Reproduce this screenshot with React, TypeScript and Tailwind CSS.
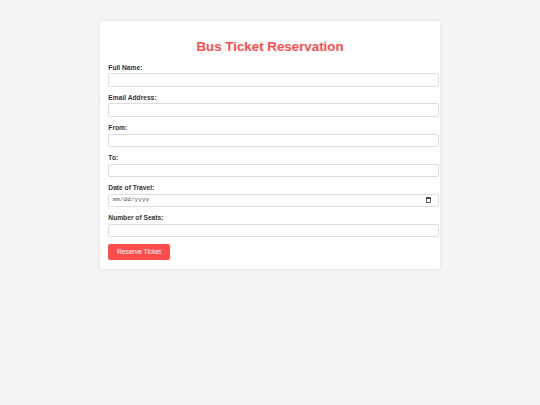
import React from "react";

const fields = [
  { label: "Full Name:", type: "text" },
  { label: "Email Address:", type: "email" },
  { label: "From:", type: "text" },
  { label: "To:", type: "text" },
  { label: "Date of Travel:", type: "date" },
  { label: "Number of Seats:", type: "number" },
];

export default function App() {
  return (
    <div className="min-h-[405px] w-full bg-[#f5f5f5] pt-[21px] [font-family:'Liberation_Sans',Arial,sans-serif]">
      <div className="mx-auto w-[340px] rounded-[3px] bg-white px-[8.33px] pt-[8.33px] pb-[9.6px] shadow-[0_0_4px_rgba(0,0,0,0.1)]">
        <h1 className="mt-[9.9px] mb-[9.4px] text-center text-[13.33px] font-bold leading-[15.33px] text-[#ff4d4d]">
          Bus Ticket Reservation
        </h1>
        <form onSubmit={(e) => e.preventDefault()}>
          {fields.map((f) => (
            <div key={f.label}>
              <label className="mb-[1.8px] block text-[6.67px] font-bold leading-[7.67px] text-[#333]">
                {f.label}
              </label>
              {f.type === "date" ? (
                <div className="mb-[7px] flex h-[13.6px] w-[331px] items-center justify-between rounded-[2px] border border-[#ddd] bg-white pl-[3.3px] pr-[7px]">
                  <span className="text-[6.1px] leading-none text-[#555] [font-family:'Liberation_Mono',monospace]">
                    mm/dd/yyyy
                  </span>
                  <svg width="5" height="6" viewBox="0 0 5 6" className="block">
                    <rect x="0.5" y="0.5" width="4" height="5" fill="none" stroke="#555" strokeWidth="0.9" />
                    <rect x="0.5" y="0.5" width="4" height="1.4" fill="#333" />
                  </svg>
                </div>
              ) : (
                <input
                  type={f.type}
                  className="mb-[7px] block h-[13.6px] w-[331px] rounded-[2px] border border-[#ddd] bg-white px-[3.3px] text-[6.67px] outline-none"
                />
              )}
            </div>
          ))}
          <button
            type="submit"
            className="block h-[15.4px] w-[61.5px] rounded-[2px] bg-[#ff4d4d] text-center text-[6.67px] leading-[15.4px] text-white"
          >
            Reserve Ticket
          </button>
        </form>
      </div>
    </div>
  );
}
